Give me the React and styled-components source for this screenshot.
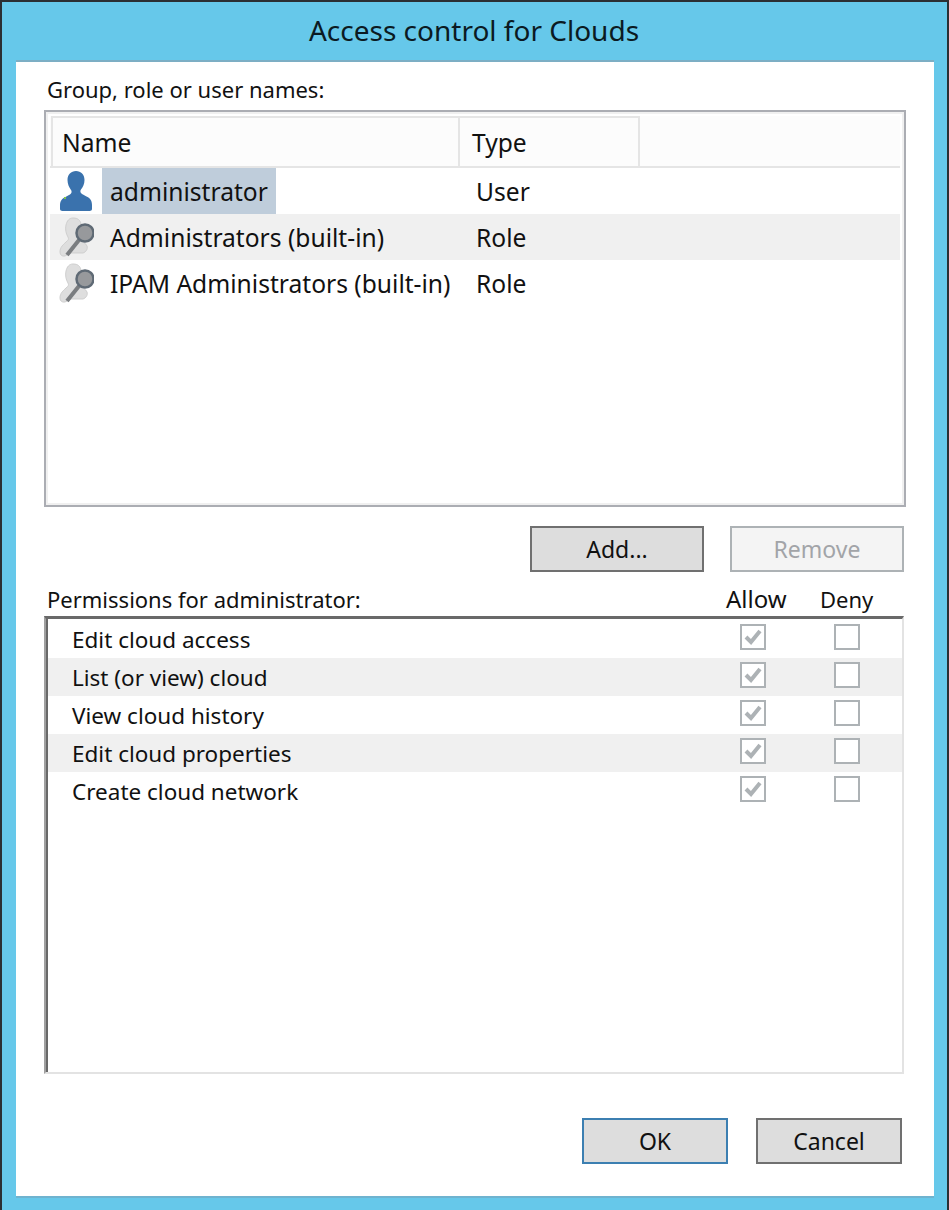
import React from 'react'
import styled, { createGlobalStyle } from 'styled-components'

const GlobalStyle = createGlobalStyle`
  html, body {
    margin: 0;
    padding: 0;
    background: #66c8ea;
  }
  * {
    box-sizing: border-box;
  }
`

const Window = styled.div`
  width: 949px;
  height: 1210px;
  padding: 0 13px 0 14px;
  background: #66c8ea;
  border-style: solid;
  border-color: #2b2f33;
  border-width: 2px 2px 0;
  font-family: "Noto Sans", "Open Sans", sans-serif;
  font-size: 23px;
  color: #111;
  overflow: hidden;
`

const Title = styled.div`
  height: 60px;
  padding: 0 2px 4px 0;
  display: flex;
  align-items: center;
  justify-content: center;
  font-size: 28px;
  color: #0b1a22;
`

const Panel = styled.div`
  background: #fff;
  padding: 0 28px;
  box-shadow: 0 2px 0 #6fb3cf, 0 -2px 0 #7caec4;
  height: 1134px;
`

const Caption = styled.div`
  height: 48px;
  padding: 11px 0 0 3px;
  font-size: 22px;
  line-height: 32px;
`

const NameList = styled.div`
  height: 397px;
  border: 2px solid #abadb3;
  box-shadow: inset 0 0 0 2px #f0f0f0;
  padding: 4px;
  font-size: 24.6px;
`

const ListHeader = styled.div`
  display: grid;
  grid-template-columns: 410px 180px 1fr;
  height: 52px;
  background: #fcfcfc;
  border-bottom: 2px solid #e5e5e5;
`

const HeaderCell = styled.div`
  display: flex;
  align-items: center;
  padding-left: ${(p) => p.$indent}px;
  margin-left: ${(p) => (p.$first ? 1 : 0)}px;
  border-top: ${(p) => (p.$plain ? 'none' : '2px solid #e5e5e5')};
  border-left: ${(p) => (p.$first ? '2px solid #e5e5e5' : 'none')};
  border-right: ${(p) => (p.$plain ? 'none' : '2px solid #e5e5e5')};
`

const NameRow = styled.div`
  display: grid;
  grid-template-columns: 52px 358px 1fr;
  height: 46px;
  background: ${(p) => (p.$shaded ? '#f0f0f0' : '#fff')};
`

const IconCell = styled.div`
  display: flex;
  align-items: center;
  padding-left: 10px;
`

const NameCell = styled.div`
  display: flex;
  align-items: center;
`

const NameText = styled.span`
  display: flex;
  align-items: center;
  height: 100%;
  padding: 1px 8px 0;
  white-space: nowrap;
  background: ${(p) => (p.$selected ? '#bfcddb' : 'transparent')};
`

const TypeCell = styled.div`
  display: flex;
  align-items: center;
  padding: 1px 0 0 16px;
`

const ListActions = styled.div`
  display: flex;
  justify-content: flex-end;
  gap: 26px;
  margin-top: 19px;
  margin-right: 2px;
`

const Button = styled.div`
  display: flex;
  align-items: center;
  justify-content: center;
  width: ${(p) => p.$width}px;
  height: 46px;
  background: ${(p) => (p.$disabled ? '#f4f4f4' : '#dddddd')};
  color: ${(p) => (p.$disabled ? '#a2a4a8' : '#111')};
  border: 2px solid ${(p) => (p.$disabled ? '#adb2b5' : p.$primary ? '#3c7fb1' : '#707070')};
`

const PermHeader = styled.div`
  display: grid;
  grid-template-columns: 1fr 60px 54px;
  column-gap: 34px;
  height: 44px;
  padding: 11px 30px 0 3px;
  line-height: 32px;
  margin-right: 2px;
  font-size: 22px;
`

const ColumnLabel = styled.span`
  font-size: ${(p) => p.$size}px;
`

const PermList = styled.div`
  height: 458px;
  margin-right: 2px;
  padding: 1px 0 0 2px;
  border-style: solid;
  border-color: #696969 #e3e3e3 #e3e3e3 #a0a0a0;
  border-width: 3px 2px 2px 2px;
  box-shadow: inset 2px 0 0 #696969;
  font-size: 22.5px;
`

const PermRow = styled.div`
  display: grid;
  grid-template-columns: 1fr 26px 26px;
  column-gap: 68px;
  height: 38px;
  padding: 4px 42px 0 24px;
  line-height: 32px;
  background: ${(p) => (p.$shaded ? '#f0f0f0' : '#fff')};
`

const CheckBox = styled.div`
  width: 26px;
  height: 26px;
  display: flex;
  align-items: center;
  justify-content: center;
  background: #fff;
  border: 2px solid #adb2b5;
`

const DialogActions = styled.div`
  display: flex;
  justify-content: flex-end;
  gap: 28px;
  margin-top: 44px;
  margin-right: 4px;
`

function UserIcon() {
  return (
    <svg width="32" height="40" viewBox="0 0 32 40">
      <path
        fill="#3a72ad"
        d="M16 0c5 0 8.500 3.500 8.500 9 0 4-1.500 7-3.500 9.500-.8 1-.8 2.500 0 3.500 1 1.200 3.500 2.500 6 3.800 3 1.500 5 3.800 5 8.200V38c0 1-1 2-2.500 2h-27C1 40 0 39 0 38v-3.500c0-4.400 2-6.700 5-8.200 2.500-1.300 5-2.600 6-3.800.8-1 .8-2.500 0-3.500C9 16 7.500 13 7.500 9 7.500 3.500 11 0 16 0z"
      />
      <rect x="4" y="26" width="2" height="2" fill="#7fc24a" />
    </svg>
  )
}

function RoleIcon() {
  return (
    <svg width="36" height="40" viewBox="0 0 36 40" style={{ marginLeft: -2 }}>
      <path
        fill="#dedede"
        stroke="#cfcfcf"
        strokeWidth="1"
        d="M15 1c5 0 7 2 8 6l1 6-2 10c2 2 6 3 7 6 1 3-1 6-4 7H13l-6 3c-3 .6-5-1-5-4 0-5 3-7 6-10 2.500-2 3-3 2-5C8 17 7 12 8 8c1-4 3-7 7-7z"
      />
      <path stroke="#7a7d80" strokeWidth="4" fill="none" d="M21 23L9 38" />
      <circle cx="27" cy="16" r="8.500" fill="#97999c" stroke="#5f6a75" strokeWidth="2.500" />
    </svg>
  )
}

function CheckMark() {
  return (
    <svg width="18" height="16" viewBox="0 0 18 16">
      <path fill="none" stroke="#adb2b5" strokeWidth="4" d="M2 8l5 5L16 2" />
    </svg>
  )
}

const names = [
  { name: 'administrator', type: 'User', icon: <UserIcon />, selected: true },
  { name: 'Administrators (built-in)', type: 'Role', icon: <RoleIcon /> },
  { name: 'IPAM Administrators (built-in)', type: 'Role', icon: <RoleIcon /> },
]

const permissions = [
  'Edit cloud access',
  'List (or view) cloud',
  'View cloud history',
  'Edit cloud properties',
  'Create cloud network',
]

export default function App() {
  return (
    <Window>
      <GlobalStyle />
      <Title>Access control for Clouds</Title>
      <Panel>
        <Caption>Group, role or user names:</Caption>
        <NameList>
          <ListHeader>
            <HeaderCell $first $indent={9}>Name</HeaderCell>
            <HeaderCell $indent={12}>Type</HeaderCell>
            <HeaderCell $plain />
          </ListHeader>
          {names.map((row, i) => (
            <NameRow key={row.name} $shaded={i === 1}>
              <IconCell>{row.icon}</IconCell>
              <NameCell>
                <NameText $selected={row.selected}>{row.name}</NameText>
              </NameCell>
              <TypeCell>{row.type}</TypeCell>
            </NameRow>
          ))}
        </NameList>
        <ListActions>
          <Button $width={174}>Add...</Button>
          <Button $width={174} $disabled>Remove</Button>
        </ListActions>
        <PermHeader>
          <span>Permissions for administrator:</span>
          <ColumnLabel $size={24}>Allow</ColumnLabel>
          <ColumnLabel $size={22}>Deny</ColumnLabel>
        </PermHeader>
        <PermList>
          {permissions.map((perm, i) => (
            <PermRow key={perm} $shaded={i % 2 === 1}>
              <span>{perm}</span>
              <CheckBox><CheckMark /></CheckBox>
              <CheckBox />
            </PermRow>
          ))}
        </PermList>
        <DialogActions>
          <Button $width={146} $primary>OK</Button>
          <Button $width={146}>Cancel</Button>
        </DialogActions>
      </Panel>
    </Window>
  )
}
